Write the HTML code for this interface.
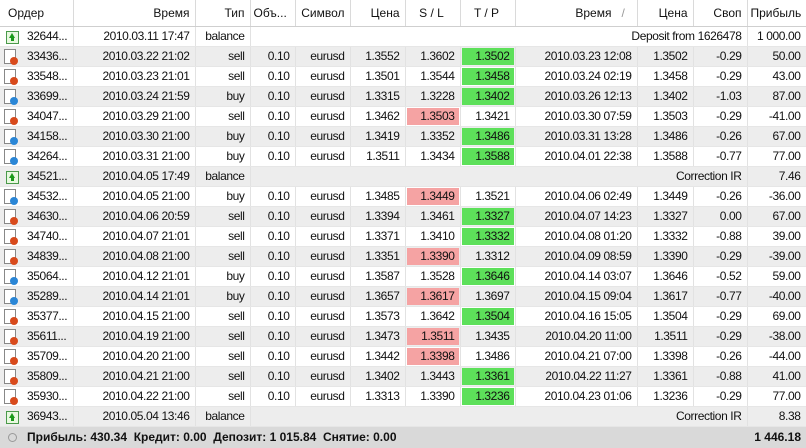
<!DOCTYPE html>
<html><head><meta charset="utf-8"><style>
body{margin:0;width:806px;height:448px;overflow:hidden;background:#fff;font-family:"Liberation Sans","DejaVu Sans",sans-serif;font-size:12px;color:#111}
table{border-collapse:collapse;table-layout:fixed;width:806px}
td,th{height:19px;line-height:19px;padding:0 5px 0 3px;border-right:1px solid #e2e2e2;border-bottom:1px solid #e6e6e6;text-align:right;white-space:nowrap;overflow:hidden;font-weight:normal;letter-spacing:-0.4px}
th{height:26px;line-height:26px;background:#fff;border-bottom:1px solid #cfcfcf;border-right:1px solid #dadada;letter-spacing:0}
th.l,td.l{text-align:left}
td.o{position:relative;padding-left:27px}
tr.g td{background:#ededed}
td.gr{background:#5de05a!important;box-shadow:inset 0 0 0 1px #fff}
td.rd{background:#f5a3a3!important;box-shadow:inset 0 0 0 1px #fff}
tr.g td.gr,tr.g td.rd{box-shadow:inset 0 0 0 1px #ededed}
.ic{position:absolute;left:4px;top:2px;width:15px;height:16px}
.doc{position:absolute;left:0;top:0;width:10px;height:13px;border:1px solid #888;background:#fff}
.dot{position:absolute;left:6px;top:8px;width:8px;height:8px;border-radius:50%}
.s .dot{background:#d84a1c}.b .dot{background:#2a86d6}
.bal{position:absolute;left:6px;top:4px;width:11px;height:11px;border:1px solid #4a9a4a;background:#e8f8e0}
.bal:after{content:"";position:absolute;left:2px;top:1px;border-left:3.5px solid transparent;border-right:3.5px solid transparent;border-bottom:5px solid #1a9a1a}
.bal:before{content:"";position:absolute;left:4px;top:5px;width:3px;height:4px;background:#1a9a1a}
.foot{position:absolute;left:0;top:427px;width:806px;height:21px;background:#d9d9d9;font-weight:bold;line-height:21px}
</style></head><body>
<table>
<colgroup><col style="width:73px"><col style="width:122px"><col style="width:55px"><col style="width:45px"><col style="width:55px"><col style="width:55px"><col style="width:55px"><col style="width:55px"><col style="width:122px"><col style="width:56px"><col style="width:54px"><col style="width:59px"></colgroup>
<tr><th class="l" style="padding-left:8px">Ордер</th><th>Время</th><th>Тип</th><th class="l">Объ...</th><th>Символ</th><th>Цена</th><th style="text-align:center">S / L</th><th style="text-align:center">T / P</th><th>Время &nbsp;&nbsp;<span style="color:#999">/</span>&nbsp;&nbsp;</th><th>Цена</th><th>Своп</th><th>Прибыль</th></tr>
<tr><td class="l o"><span class="bal"></span>32644...</td><td>2010.03.11 17:47</td><td>balance</td><td colspan="8">Deposit from 1626478</td><td>1 000.00</td></tr>
<tr class="g"><td class="l o"><span class="ic s"><i class="doc"></i><i class="dot"></i></span>33436...</td><td>2010.03.22 21:02</td><td>sell</td><td>0.10</td><td>eurusd</td><td>1.3552</td><td>1.3602</td><td class="gr">1.3502</td><td>2010.03.23 12:08</td><td>1.3502</td><td>-0.29</td><td>50.00</td></tr>
<tr><td class="l o"><span class="ic s"><i class="doc"></i><i class="dot"></i></span>33548...</td><td>2010.03.23 21:01</td><td>sell</td><td>0.10</td><td>eurusd</td><td>1.3501</td><td>1.3544</td><td class="gr">1.3458</td><td>2010.03.24 02:19</td><td>1.3458</td><td>-0.29</td><td>43.00</td></tr>
<tr class="g"><td class="l o"><span class="ic b"><i class="doc"></i><i class="dot"></i></span>33699...</td><td>2010.03.24 21:59</td><td>buy</td><td>0.10</td><td>eurusd</td><td>1.3315</td><td>1.3228</td><td class="gr">1.3402</td><td>2010.03.26 12:13</td><td>1.3402</td><td>-1.03</td><td>87.00</td></tr>
<tr><td class="l o"><span class="ic s"><i class="doc"></i><i class="dot"></i></span>34047...</td><td>2010.03.29 21:00</td><td>sell</td><td>0.10</td><td>eurusd</td><td>1.3462</td><td class="rd">1.3503</td><td>1.3421</td><td>2010.03.30 07:59</td><td>1.3503</td><td>-0.29</td><td>-41.00</td></tr>
<tr class="g"><td class="l o"><span class="ic b"><i class="doc"></i><i class="dot"></i></span>34158...</td><td>2010.03.30 21:00</td><td>buy</td><td>0.10</td><td>eurusd</td><td>1.3419</td><td>1.3352</td><td class="gr">1.3486</td><td>2010.03.31 13:28</td><td>1.3486</td><td>-0.26</td><td>67.00</td></tr>
<tr><td class="l o"><span class="ic b"><i class="doc"></i><i class="dot"></i></span>34264...</td><td>2010.03.31 21:00</td><td>buy</td><td>0.10</td><td>eurusd</td><td>1.3511</td><td>1.3434</td><td class="gr">1.3588</td><td>2010.04.01 22:38</td><td>1.3588</td><td>-0.77</td><td>77.00</td></tr>
<tr class="g"><td class="l o"><span class="bal"></span>34521...</td><td>2010.04.05 17:49</td><td>balance</td><td colspan="8">Correction IR</td><td>7.46</td></tr>
<tr><td class="l o"><span class="ic b"><i class="doc"></i><i class="dot"></i></span>34532...</td><td>2010.04.05 21:00</td><td>buy</td><td>0.10</td><td>eurusd</td><td>1.3485</td><td class="rd">1.3449</td><td>1.3521</td><td>2010.04.06 02:49</td><td>1.3449</td><td>-0.26</td><td>-36.00</td></tr>
<tr class="g"><td class="l o"><span class="ic s"><i class="doc"></i><i class="dot"></i></span>34630...</td><td>2010.04.06 20:59</td><td>sell</td><td>0.10</td><td>eurusd</td><td>1.3394</td><td>1.3461</td><td class="gr">1.3327</td><td>2010.04.07 14:23</td><td>1.3327</td><td>0.00</td><td>67.00</td></tr>
<tr><td class="l o"><span class="ic s"><i class="doc"></i><i class="dot"></i></span>34740...</td><td>2010.04.07 21:01</td><td>sell</td><td>0.10</td><td>eurusd</td><td>1.3371</td><td>1.3410</td><td class="gr">1.3332</td><td>2010.04.08 01:20</td><td>1.3332</td><td>-0.88</td><td>39.00</td></tr>
<tr class="g"><td class="l o"><span class="ic s"><i class="doc"></i><i class="dot"></i></span>34839...</td><td>2010.04.08 21:00</td><td>sell</td><td>0.10</td><td>eurusd</td><td>1.3351</td><td class="rd">1.3390</td><td>1.3312</td><td>2010.04.09 08:59</td><td>1.3390</td><td>-0.29</td><td>-39.00</td></tr>
<tr><td class="l o"><span class="ic b"><i class="doc"></i><i class="dot"></i></span>35064...</td><td>2010.04.12 21:01</td><td>buy</td><td>0.10</td><td>eurusd</td><td>1.3587</td><td>1.3528</td><td class="gr">1.3646</td><td>2010.04.14 03:07</td><td>1.3646</td><td>-0.52</td><td>59.00</td></tr>
<tr class="g"><td class="l o"><span class="ic b"><i class="doc"></i><i class="dot"></i></span>35289...</td><td>2010.04.14 21:01</td><td>buy</td><td>0.10</td><td>eurusd</td><td>1.3657</td><td class="rd">1.3617</td><td>1.3697</td><td>2010.04.15 09:04</td><td>1.3617</td><td>-0.77</td><td>-40.00</td></tr>
<tr><td class="l o"><span class="ic s"><i class="doc"></i><i class="dot"></i></span>35377...</td><td>2010.04.15 21:00</td><td>sell</td><td>0.10</td><td>eurusd</td><td>1.3573</td><td>1.3642</td><td class="gr">1.3504</td><td>2010.04.16 15:05</td><td>1.3504</td><td>-0.29</td><td>69.00</td></tr>
<tr class="g"><td class="l o"><span class="ic s"><i class="doc"></i><i class="dot"></i></span>35611...</td><td>2010.04.19 21:00</td><td>sell</td><td>0.10</td><td>eurusd</td><td>1.3473</td><td class="rd">1.3511</td><td>1.3435</td><td>2010.04.20 11:00</td><td>1.3511</td><td>-0.29</td><td>-38.00</td></tr>
<tr><td class="l o"><span class="ic s"><i class="doc"></i><i class="dot"></i></span>35709...</td><td>2010.04.20 21:00</td><td>sell</td><td>0.10</td><td>eurusd</td><td>1.3442</td><td class="rd">1.3398</td><td>1.3486</td><td>2010.04.21 07:00</td><td>1.3398</td><td>-0.26</td><td>-44.00</td></tr>
<tr class="g"><td class="l o"><span class="ic s"><i class="doc"></i><i class="dot"></i></span>35809...</td><td>2010.04.21 21:00</td><td>sell</td><td>0.10</td><td>eurusd</td><td>1.3402</td><td>1.3443</td><td class="gr">1.3361</td><td>2010.04.22 11:27</td><td>1.3361</td><td>-0.88</td><td>41.00</td></tr>
<tr><td class="l o"><span class="ic s"><i class="doc"></i><i class="dot"></i></span>35930...</td><td>2010.04.22 21:00</td><td>sell</td><td>0.10</td><td>eurusd</td><td>1.3313</td><td>1.3390</td><td class="gr">1.3236</td><td>2010.04.23 01:06</td><td>1.3236</td><td>-0.29</td><td>77.00</td></tr>
<tr class="g"><td class="l o"><span class="bal"></span>36943...</td><td>2010.05.04 13:46</td><td>balance</td><td colspan="8">Correction IR</td><td>8.38</td></tr>
</table>
<div class="foot"><span style="display:inline-block;width:7px;height:7px;border:1px solid #999;border-radius:50%;margin:0 10px 0 8px;vertical-align:middle"></span>Прибыль: 430.34&nbsp; Кредит: 0.00&nbsp; Депозит: 1 015.84&nbsp; Снятие: 0.00<span style="position:absolute;right:5px">1 446.18</span></div>
</body></html>
